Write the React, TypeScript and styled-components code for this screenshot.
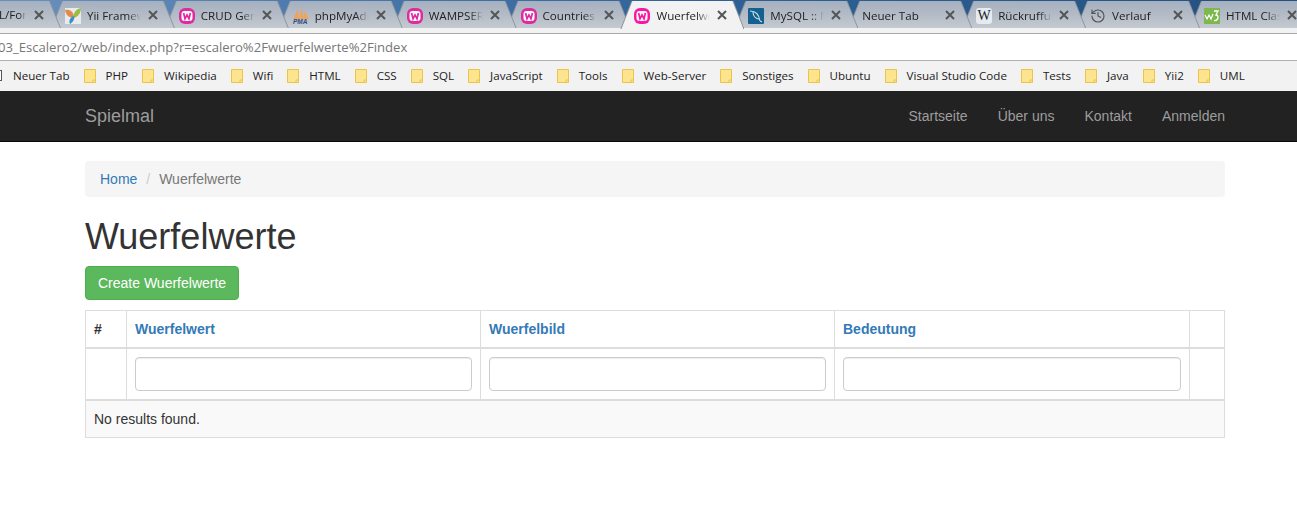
import React from "react";
import styled, { createGlobalStyle } from "styled-components";
import { History } from "lucide-react";

const Global = createGlobalStyle`
  html, body { margin: 0; padding: 0; height: 528px; overflow: hidden; background: #fff; }
  body { font-family: "Liberation Sans", Arial, sans-serif; font-size: 14px; line-height: 20px; color: #333; }
  * { box-sizing: border-box; }
`;

const Chrome = styled.div`
  height: 91px;
  overflow: hidden;
  font-family: "Open Sans", "Noto Sans", sans-serif;
  background: #f2f2f2;
`;
const TabStrip = styled.div`
  display: flex;
  height: 28px;
  padding-top: 1px;
  background: linear-gradient(90deg, #6a90bd 0%, #4b79ad 25%, #2f6196 55%, #24507f 100%);
  border-bottom: 1px solid #8f98a3;
`;
const TAB_SHAPE = "polygon(0 100%, 11px 0, calc(100% - 11px) 0, 100% 100%)";
const Tab = styled.div<{ $active?: boolean; $first?: boolean; $order: number }>`
  position: relative;
  flex: 0 0 124px;
  height: ${p => (p.$active ? "28px" : "27px")};
  margin-left: ${p => (p.$first ? "-63px" : "0")};
  margin-right: -10.1px;
  padding: 2px 0 0 14px;
  display: flex;
  align-items: center;
  gap: 6px;
  z-index: ${p => (p.$active ? 50 : 30 - p.$order)};
  background: ${p => (p.$active ? "#8d949c" : "#8b95a1")};
  clip-path: ${TAB_SHAPE};
  &::before {
    content: "";
    position: absolute;
    inset: 0 1px 0 1px;
    clip-path: ${TAB_SHAPE};
    background: ${p =>
      p.$active
        ? "#f2f2f2"
        : "linear-gradient(180deg, #a5b0bf 0%, #b3bbc6 50%, #c5cad1 100%)"};
  }
`;
const TabIcon = styled.span`
  position: relative;
  flex: 0 0 16px;
  width: 16px;
  height: 16px;
  display: block;
`;
const WikiIcon = styled(TabIcon)`
  background: #e6ebf2;
  border-radius: 3px;
  color: #222;
  font: 14px/16px "Liberation Serif", serif;
  text-align: center;
`;
const TabTitle = styled.span<{ $wide?: boolean }>`
  position: relative;
  width: ${p => (p.$wide ? "80px" : "54px")};
  flex: none;
  font-size: 11.6px;
  line-height: 16px;
  color: #222;
  white-space: nowrap;
  overflow: hidden;
  -webkit-mask-image: linear-gradient(90deg, #000 75%, transparent 100%);
  mask-image: linear-gradient(90deg, #000 75%, transparent 100%);
`;
const TabClose = styled.svg`
  position: absolute;
  left: 97px;
  top: 9px;
  width: 10px;
  height: 10px;
  stroke: #555;
  stroke-width: 2;
`;
const AddressBar = styled.div`
  margin-top: 5px;
  height: 28px;
  background: #fff;
  border-top: 1px solid #a9a9a9;
  border-bottom: 1px solid #b0b0b0;
  font-size: 13.1px;
  line-height: 26px;
  color: #777;
  white-space: nowrap;
  overflow: hidden;
  text-indent: -2px;
`;
const BookmarkBar = styled.div`
  display: flex;
  align-items: center;
  gap: 14px;
  height: 29px;
  white-space: nowrap;
  color: #222;
  font-size: 11.6px;
`;
const PageStub = styled.span`
  width: 8px;
  height: 11px;
  margin-left: -6px;
  margin-right: -3px;
  border: 1px solid #555;
  background: #fff;
  flex: none;
`;
const Bookmark = styled.span`
  display: inline-flex;
  align-items: center;
  gap: 10px;
  line-height: 16px;
`;
const FolderIcon = styled.svg`
  width: 12px;
  height: 14px;
  flex: none;
`;

const Navbar = styled.nav`
  height: 51px;
  background: #222;
  border-bottom: 1px solid #080808;
  display: flex;
  justify-content: space-between;
  align-items: center;
  padding: 0 57px 0 85px;
`;
const Brand = styled.a`
  font-size: 18px;
  color: #9d9d9d;
`;
const NavList = styled.div`
  display: flex;
`;
const NavLink = styled.a`
  padding: 0 15px;
  color: #9d9d9d;
  font-size: 14px;
`;
const Main = styled.main`
  width: 1140px;
  margin-left: 85px;
  padding-top: 19px;
`;
const Breadcrumb = styled.ol`
  display: flex;
  list-style: none;
  margin: 0 0 20px;
  padding: 8px 15px;
  background: #f5f5f5;
  border-radius: 4px;
  color: #777;
`;
const CrumbLink = styled.a`
  color: #337ab7;
`;
const CrumbSep = styled.span`
  color: #ccc;
  padding: 0 5px 0 9px;
`;
const Title = styled.h1`
  margin: 0 0 9px;
  font-size: 36px;
  font-weight: 500;
  line-height: 39.6px;
  color: #333;
`;
const CreateButton = styled.a`
  display: inline-block;
  height: 34px;
  padding: 6px 12px;
  border: 1px solid #4cae4c;
  border-radius: 4px;
  background: #5cb85c;
  color: #fff;
`;
const Actions = styled.p`
  margin: 0 0 10px;
  height: 34px;
`;
const Table = styled.table`
  width: 1140px;
  table-layout: fixed;
  border-collapse: collapse;
  border: 1px solid #ddd;
`;
const Th = styled.th`
  padding: 8px;
  height: 37px;
  border: 1px solid #ddd;
  border-bottom-width: 2px;
  text-align: left;
  font-weight: 700;
  color: #333;
`;
const SortLink = styled.a`
  color: #337ab7;
`;
const FilterCell = styled.td`
  padding: 8px;
  height: 50px;
  border: 1px solid #ddd;
  border-bottom-width: 2px;
`;
const FilterInput = styled.input`
  display: block;
  width: 100%;
  height: 34px;
  border: 1px solid #ccc;
  border-radius: 4px;
  background: #fff;
  box-shadow: inset 0 1px 1px rgba(0, 0, 0, 0.075);
`;
const EmptyCell = styled.td`
  padding: 8px;
  height: 37px;
  background: #f9f9f9;
  border: 1px solid #ddd;
  color: #333;
`;

const Close = () => (
  <TabClose viewBox="0 0 10 10">
    <path d="M1 1 L9 9 M9 1 L1 9" />
  </TabClose>
);

const Wamp: React.FC<{ color: string }> = ({ color }) => (
  <TabIcon as="svg" viewBox="0 0 16 16">
    <rect x="0" y="0" width="16" height="16" rx="6" fill={color} />
    <rect x="2.5" y="3" width="11" height="10" rx="3" fill="#fff" />
    <path d="M4.6 5 L6 10.8 L8 6.8 L10 10.8 L11.4 5" fill="none" stroke={color} strokeWidth="1.7" />
  </TabIcon>
);
const Yii = () => (
  <TabIcon as="svg" viewBox="0 0 16 16">
    <rect width="16" height="16" fill="#e6ebee" />
    <path d="M0 2 C4 1 9 3 9 10 C5 10 1 8 0 2Z" fill="#e58a4e" />
    <path d="M16 0 C16 5 13 9 8.5 10 C8 5 11 1 16 0Z" fill="#9dbb3e" />
    <path d="M9 8 C10 11 8 14 5 16 C3.5 13 5 9 9 8Z" fill="#3b8ecb" />
  </TabIcon>
);
const Pma = () => (
  <TabIcon as="svg" viewBox="0 0 16 16">
    <path d="M0 11 L5 1 L6.5 11Z M6 11 L9 0 L10.5 11Z M10 11 L12 3 L16 11Z" fill="#f0a35a" />
    <text x="0" y="16" fontSize="6.5" fontWeight="700" fontStyle="italic" fill="#2a4d8a" fontFamily="Liberation Sans">PMA</text>
  </TabIcon>
);
const MySql = () => (
  <TabIcon as="svg" viewBox="0 0 16 16">
    <rect width="16" height="16" rx="1" fill="#14608f" />
    <path d="M2 3 C7 3 11 6 12 13 M5 4 C5 8 8 11 11 11 M12 13 L14 14" fill="none" stroke="#cfe3ee" strokeWidth="1.1" />
  </TabIcon>
);
const W3 = () => (
  <TabIcon as="svg" viewBox="0 0 16 16">
    <rect width="16" height="16" fill="#7cb84e" />
    <path d="M1 7 L3 11 L5 7 L7 11 L9 6" fill="none" stroke="#fff" strokeWidth="1.2" />
    <path d="M10 3 H14 L12 7 C15 7 15 13 10 12.5" fill="none" stroke="#fff" strokeWidth="1.3" />
  </TabIcon>
);
const HistoryIcon = styled(History)`
  position: relative;
  flex: 0 0 16px;
  color: #555;
`;

const Folder = () => (
  <FolderIcon viewBox="0 0 12 14">
    <path d="M.5.5 H11.5 V13.5 H.5Z" fill="#fde58f" stroke="#ecc44a" />
    <path d="M9 11 H11.5 V13.5 H9Z" fill="#fde58f" stroke="#ecc44a" />
  </FolderIcon>
);

const tabs: { icon?: React.ReactNode; title: string; active?: boolean; wide?: boolean }[] = [
  { title: "", icon: null },
  { icon: <Yii />, title: "Yii Framework" },
  { icon: <Wamp color="#e02aa2" />, title: "CRUD Generator" },
  { icon: <Pma />, title: "phpMyAdmin" },
  { icon: <Wamp color="#e02aa2" />, title: "WAMPSERVER" },
  { icon: <Wamp color="#e02aa2" />, title: "Countries" },
  { icon: <Wamp color="#fb17a5" />, title: "Wuerfelwerte", active: true },
  { icon: <MySql />, title: "MySQL :: MySQL" },
  { title: "Neuer Tab", wide: true },
  { icon: <WikiIcon>W</WikiIcon>, title: "Rückruffunktion" },
  { icon: <HistoryIcon size={16} strokeWidth={1.8} />, title: "Verlauf" },
  { icon: <W3 />, title: "HTML Class" },
];

const bookmarks = ["PHP", "Wikipedia", "Wifi", "HTML", "CSS", "SQL", "JavaScript", "Tools", "Web-Server", "Sonstiges", "Ubuntu", "Visual Studio Code", "Tests", "Java", "Yii2", "UML"];
const navItems = ["Startseite", "Über uns", "Kontakt", "Anmelden"];

const FirstTabTitle = styled(TabTitle)`
  position: absolute;
  left: 63px;
  top: 6px;
  width: 26px;
  text-indent: -1px;
`;

export default function App() {
  return (
    <>
      <Global />
      <Chrome>
        <TabStrip>
          {tabs.map((t, i) => (
            <Tab key={i} $active={t.active} $first={i === 0} $order={i}>
              {i === 0 ? <FirstTabTitle>L/Forms</FirstTabTitle> : (
                <>
                  {t.icon}
                  <TabTitle $wide={t.wide}>{t.title}</TabTitle>
                </>
              )}
              <Close />
            </Tab>
          ))}
        </TabStrip>
        <AddressBar>03_Escalero2/web/index.php?r=escalero%2Fwuerfelwerte%2Findex</AddressBar>
        <BookmarkBar>
          <PageStub />
          <Bookmark>Neuer Tab</Bookmark>
          {bookmarks.map(b => (
            <Bookmark key={b}>
              <Folder />
              {b}
            </Bookmark>
          ))}
        </BookmarkBar>
      </Chrome>
      <Navbar>
        <Brand>Spielmal</Brand>
        <NavList>
          {navItems.map(n => (
            <NavLink key={n}>{n}</NavLink>
          ))}
        </NavList>
      </Navbar>
      <Main>
        <Breadcrumb>
          <CrumbLink>Home</CrumbLink>
          <CrumbSep>/</CrumbSep>
          <span>&nbsp;Wuerfelwerte</span>
        </Breadcrumb>
        <Title>Wuerfelwerte</Title>
        <Actions>
          <CreateButton>Create Wuerfelwerte</CreateButton>
        </Actions>
        <Table>
          <colgroup>
            <col style={{ width: 41 }} />
            <col style={{ width: 354 }} />
            <col style={{ width: 354 }} />
            <col style={{ width: 355 }} />
            <col />
          </colgroup>
          <thead>
            <tr>
              <Th>#</Th>
              <Th><SortLink>Wuerfelwert</SortLink></Th>
              <Th><SortLink>Wuerfelbild</SortLink></Th>
              <Th><SortLink>Bedeutung</SortLink></Th>
              <Th />
            </tr>
            <tr>
              <FilterCell />
              <FilterCell><FilterInput /></FilterCell>
              <FilterCell><FilterInput /></FilterCell>
              <FilterCell><FilterInput /></FilterCell>
              <FilterCell />
            </tr>
          </thead>
          <tbody>
            <tr>
              <EmptyCell colSpan={5}>No results found.</EmptyCell>
            </tr>
          </tbody>
        </Table>
      </Main>
    </>
  );
}
